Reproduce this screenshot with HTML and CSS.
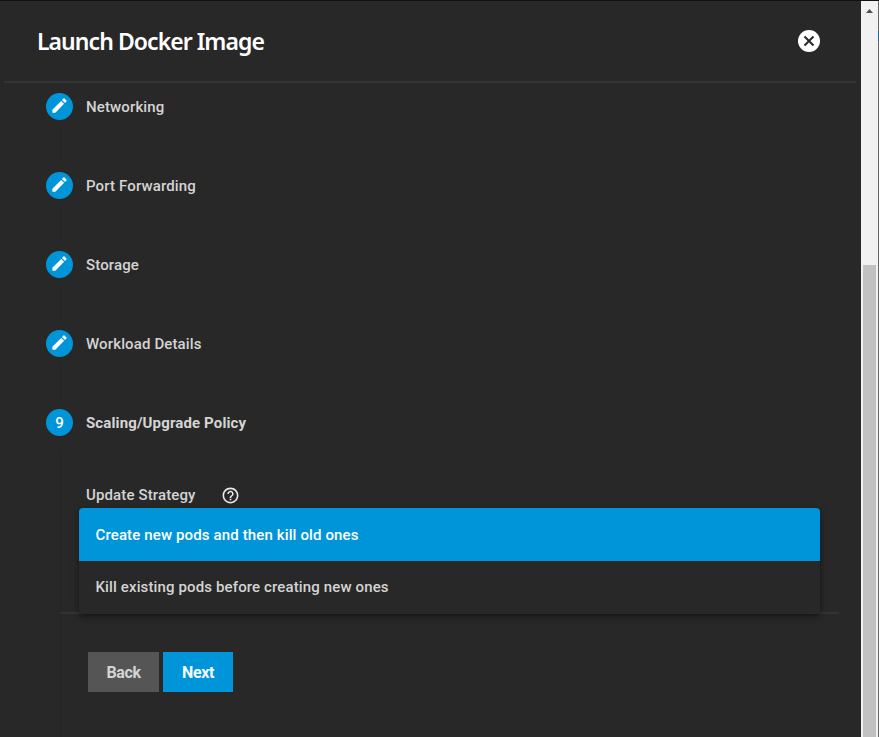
FILE: index.html
```html
<!DOCTYPE html>
<html lang="en">
<head>
<meta charset="utf-8">
<title>Launch Docker Image</title>
<link rel="stylesheet" href="styles.css">
</head>
<body>
<svg class="defs" width="0" height="0"><symbol id="pencil" viewBox="0 0 24 24"><path d="M3 17.25V21h3.75L17.81 9.94l-3.75-3.75L3 17.25zM20.71 7.04a1 1 0 0 0 0-1.41l-2.34-2.34a1 1 0 0 0-1.41 0l-1.83 1.83 3.75 3.75 1.83-1.83z"/></symbol></svg>
<div class="window">
  <main class="panel">
    <header class="header">
      <h1 class="title">Launch Docker Image</h1>
      <svg class="close" viewBox="0 0 22 22"><circle cx="11" cy="11" r="11"/><path d="M6.5 6.5l9 9M15.5 6.5l-9 9"/></svg>
    </header>
    <section class="step"><span class="badge"><svg><use href="#pencil"/></svg></span><span class="label">Networking</span></section>
    <section class="step"><span class="badge"><svg><use href="#pencil"/></svg></span><span class="label">Port Forwarding</span></section>
    <section class="step"><span class="badge"><svg><use href="#pencil"/></svg></span><span class="label">Storage</span></section>
    <section class="step"><span class="badge"><svg><use href="#pencil"/></svg></span><span class="label">Workload Details</span></section>
    <section class="step last"><span class="badge">9</span><span class="label active">Scaling/Upgrade Policy</span></section>
    <div class="content">
      <div class="field"><span class="field-name">Update Strategy</span>
        <svg class="help" viewBox="0 0 24 24"><path d="M11 18h2v-2h-2v2zm1-16C6.48 2 2 6.48 2 12s4.480 10 10 10 10-4.480 10-10S17.520 2 12 2zm0 18c-4.410 0-8-3.590-8-8s3.590-8 8-8 8 3.590 8 8-3.590 8-8 8zm0-14c-2.210 0-4 1.790-4 4h2c0-1.100.9-2 2-2s2 .9 2 2c0 2-3 1.750-3 5h2c0-2.250 3-2.500 3-5 0-2.210-1.790-4-4-4z"/></svg>
      </div>
      <div class="select">
        <div class="menu">
          <div class="option selected">Create new pods and then kill old ones</div>
          <div class="option">Kill existing pods before creating new ones</div>
        </div>
      </div>
      <div class="buttons"><button class="back">Back</button><button class="next">Next</button></div>
    </div>
  </main>
  <aside class="scrollbar"><svg class="arrow" viewBox="0 0 7 4"><path d="M0 4h7L3.500 0z"/></svg><div class="thumb"></div></aside>
  <div class="edge"></div>
</div>
</body>
</html>
```
FILE: styles.css
```css
* { box-sizing: border-box; }
body { margin: 0; background: #282828; font: 500 15px/20px Roboto, sans-serif; letter-spacing: 0.13px; color: #d4d4d4; }
.defs { display: block; }
.window { display: flex; height: 737px; overflow: hidden; border-top: 1px solid #111; }
.panel { width: 861px; height: 736px; }
.header { display: flex; justify-content: space-between; align-items: center; height: 82px; margin: 0 5px 0 4px; padding: 0 36px 0 33px; border-bottom: 2px solid #333; }
.title { margin: 0; font: 600 23px/32px "Noto Sans", sans-serif; letter-spacing: -0.95px; color: #fff; white-space: nowrap; }
.close { width: 22px; height: 22px; fill: #fff; }
.close path { stroke: #282828; stroke-width: 2; fill: none; }
.step { display: flex; align-items: flex-start; height: 79px; margin-left: 46px; padding-top: 10px; background: linear-gradient(#232323, #232323) 14px 45px / 1px 36px no-repeat; }
.step.last { height: 51px; background: none; }
.badge { display: flex; align-items: center; justify-content: center; width: 27px; height: 27px; border-radius: 50%; background: #0095d8; color: #fff; }
.badge svg { width: 19px; height: 19px; margin-bottom: 3px; fill: #fff; }
.label { margin: 4px 0 0 13px; }
.active { font-weight: 700; }
.content { margin-left: 60px; height: 287px; border-left: 1px solid #232323; padding-top: 35px; }
.field { display: flex; height: 24px; margin-left: 25px; align-items: flex-start; }
.help { width: 19px; height: 19px; margin: 1px 0 0 25px; fill: #e8e8e8; }
.select { width: 779px; height: 106px; margin-top: -1px; margin-left: -1px; border-bottom: 2px solid #333; }
.menu { position: relative; width: 741px; height: 106px; margin-left: 19px; border-radius: 4px; background: #282828; overflow: hidden; box-shadow: 0 2px 4px -1px #0005, 0 4px 5px #0002, 0 1px 10px #0002; }
.option { height: 53px; padding: 16px 16.5px; white-space: nowrap; }
.selected { padding-top: 17px; background: #0095d8; color: #fff; }
.buttons { display: flex; gap: 4px; margin: 38px 0 0 27px; }
button { width: 71px; height: 40px; padding: 0; border: 0; font: 700 16px Roboto, sans-serif; letter-spacing: -0.4px; }
.back { background: #555; color: #d4d4d4; }
.next { width: 70px; background: #0095d8; color: #f4faff; }
.scrollbar { width: 17px; padding: 8px 2px 0; background: #f1f1f1; }
.arrow { display: block; width: 7px; height: 4px; margin-left: 3px; fill: #505050; }
.thumb { height: 473px; width: 13px; margin-top: 252px; background: #c1c1c1; }
.edge { width: 1px; background: linear-gradient(#666 30px, #28638a 30px 40px, #666 40px); }
```
